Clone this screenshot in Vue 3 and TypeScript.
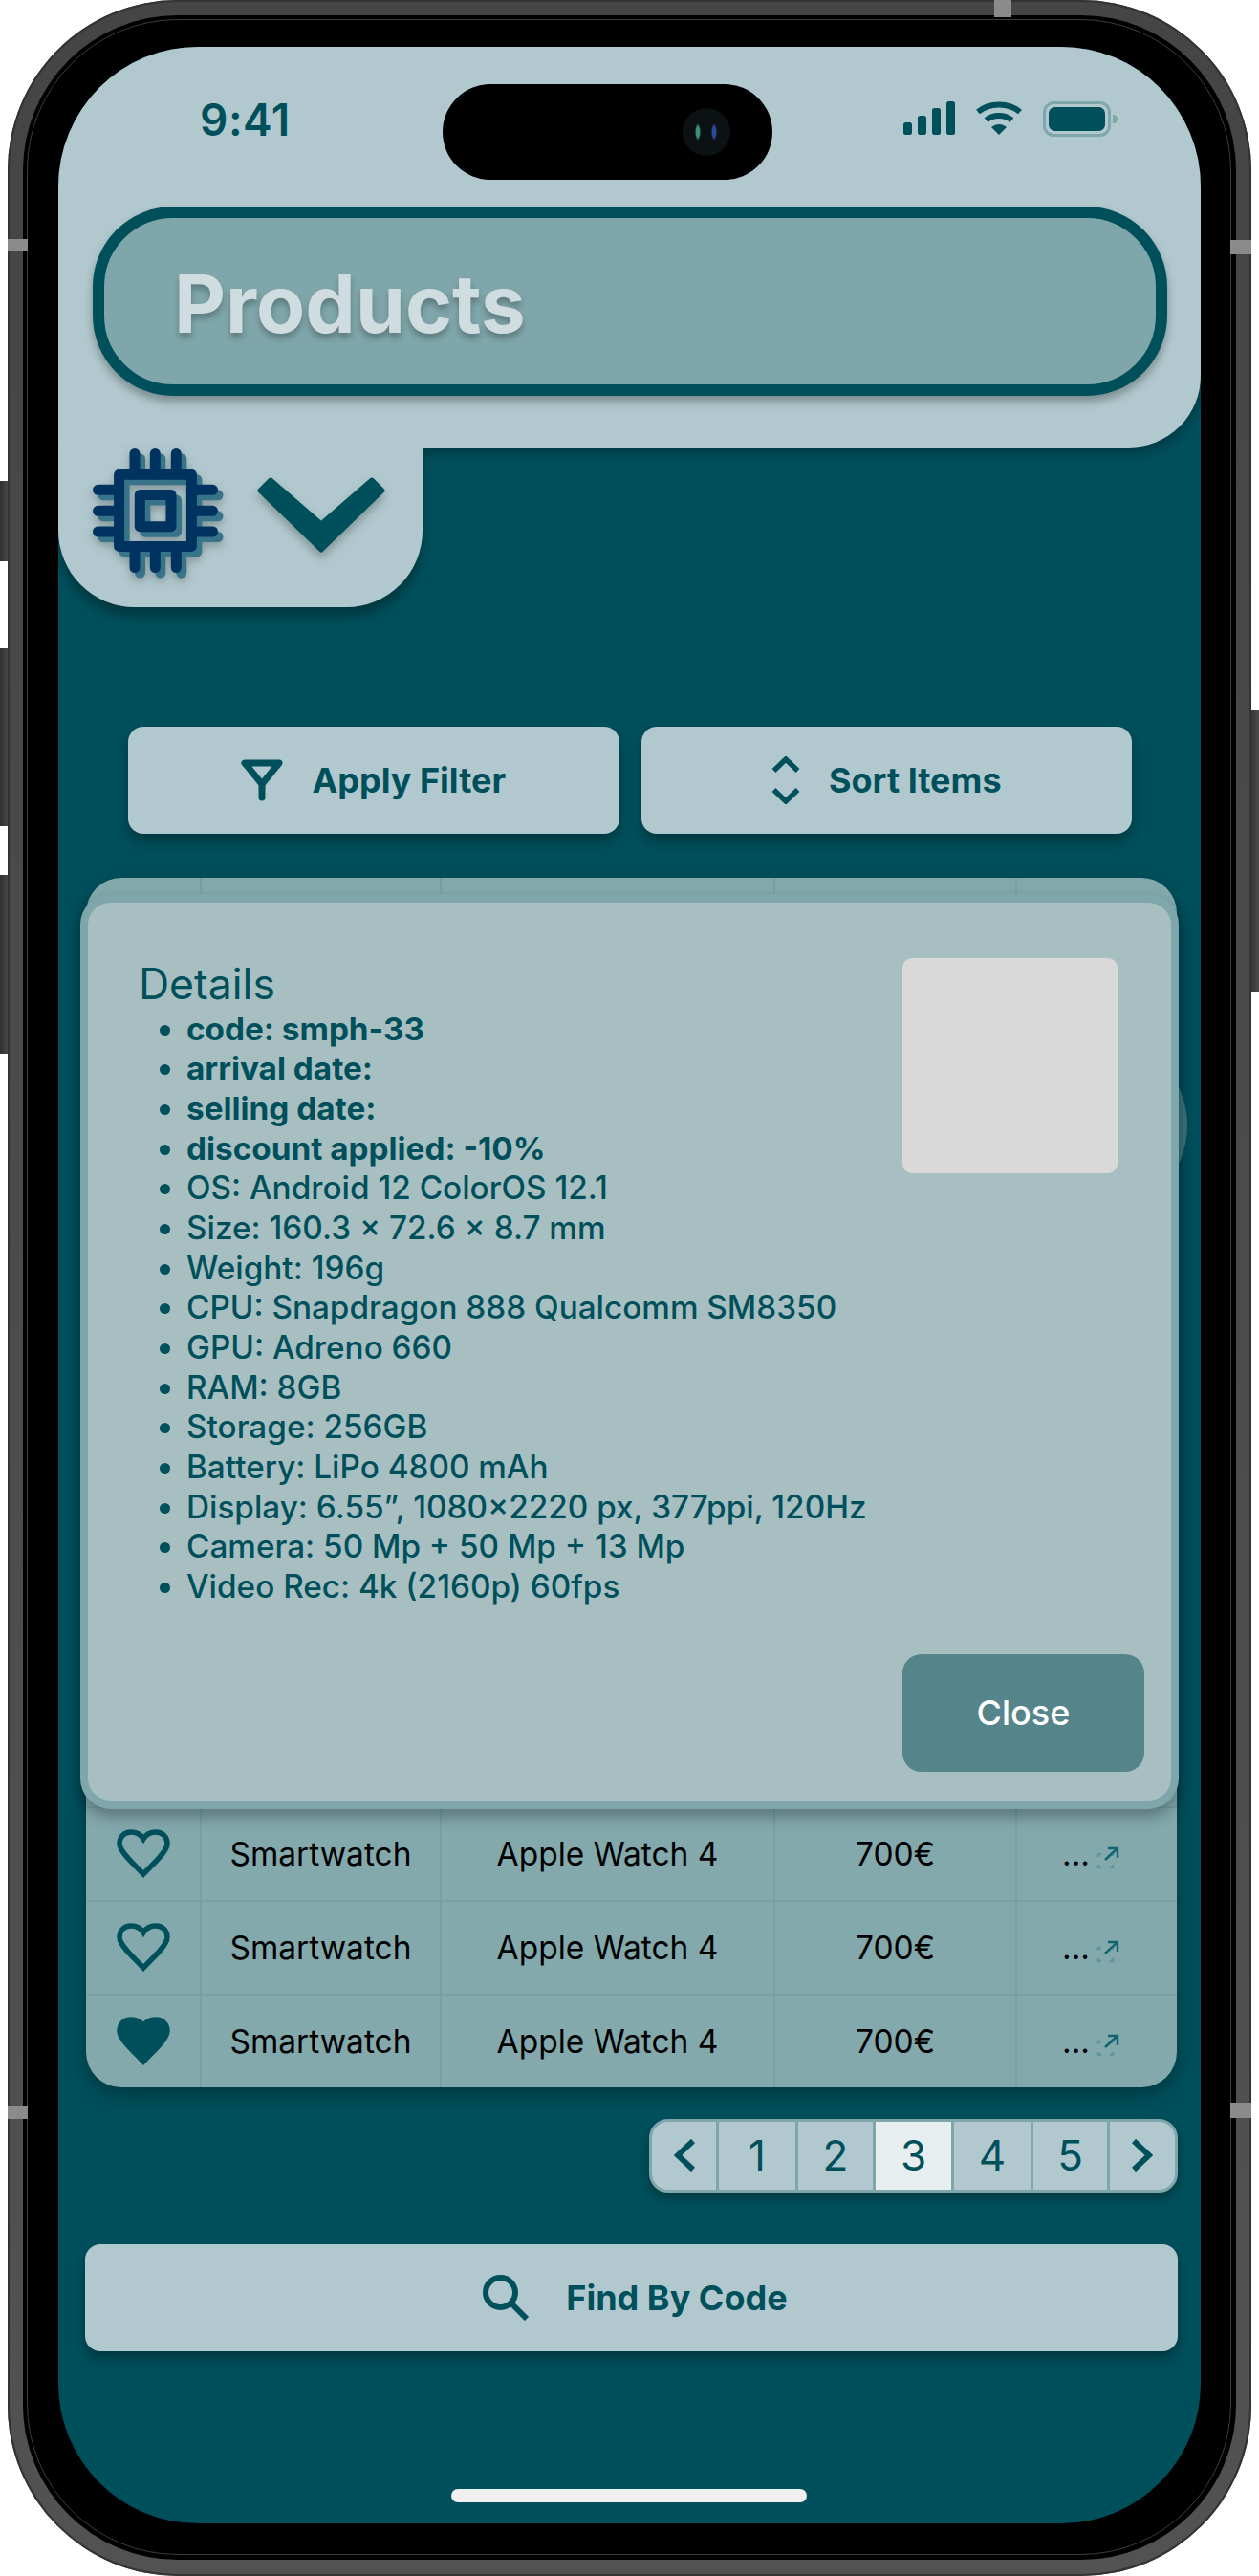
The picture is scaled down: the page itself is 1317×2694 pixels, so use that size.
<template>
  <div class="page">
    <span class="side side-mute"></span>
    <span class="side side-up"></span>
    <span class="side side-down"></span>
    <span class="side side-power"></span>

    <div class="device">
      <span class="band band-lt"></span>
      <span class="band band-rt"></span>
      <span class="band band-lb"></span>
      <span class="band band-rb"></span>
      <span class="band band-top"></span>

      <div class="bezel">
        <div class="bezel-inner">
          <div class="screen">
            <header class="header">
              <div class="status">
                <span class="time">9:41</span>
                <div class="island"><span class="camera"></span></div>
                <div class="status-icons">
                  <svg width="54" height="35" viewBox="0 0 54 35" fill="#00505c">
                    <rect x="0" y="22" width="9" height="13" rx="2.5" />
                    <rect x="15" y="15" width="9" height="20" rx="2.5" />
                    <rect x="30" y="7" width="9" height="28" rx="2.5" />
                    <rect x="45" y="0" width="9" height="35" rx="2.5" />
                  </svg>
                  <svg width="48" height="35" viewBox="0 0 48 35" fill="none" stroke="#00505c" stroke-width="6">
                    <path d="M2 11C14 1 34 1 46 11" />
                    <path d="M10.5 19.5C18 13.5 30 13.5 37.5 19.5" />
                    <path d="M16 27L24 35L32 27C27 23 21 23 16 27Z" fill="#00505c" stroke="none" />
                  </svg>
                  <svg width="78" height="37" viewBox="0 0 78 37">
                    <rect x="1.5" y="1.5" width="68" height="34" rx="10" fill="none" stroke="#7fa6aa" stroke-width="3" />
                    <rect x="6" y="6" width="59" height="25" rx="6.5" fill="#00505c" />
                    <path d="M73 14C76 14 78 16 78 18.5C78 21 76 23 73 23Z" fill="#7fa6aa" />
                  </svg>
                </div>
              </div>
              <div class="title-pill">
                <h1 class="title">Products</h1>
              </div>
            </header>

            <div class="tab">
              <svg class="chip" width="137" height="136" viewBox="0 0 137 136" fill="none" stroke-linecap="round" stroke-linejoin="round">
                <g v-for="layer in chipLayers" :key="layer.color" :stroke="layer.color" :transform="layer.shift" stroke-width="11">
                  <rect x="27.6" y="27.3" width="75.8" height="75.1" />
                  <rect x="49.3" y="48.6" width="32.7" height="33.1" />
                  <path d="M44 5.5V27M65.3 5.5V27M87.3 5.5V27M44 103V124.5M65.3 103V124.5M87.3 103V124.5" />
                  <path d="M5.5 43.3H27M5.5 65.3H27M5.5 87H27M104 43.3H125.5M104 65.3H125.5M104 87H125.5" />
                </g>
              </svg>
              <svg class="chevron" width="134" height="79" viewBox="0 0 134 79">
                <polygon points="3,14 14,3 67,49 120,3 131,14 67,76" fill="#00505c" stroke="#00505c" stroke-width="5" stroke-linejoin="round" />
              </svg>
            </div>

            <div class="actions">
              <button class="action">
                <svg width="44" height="44" viewBox="0 0 44 44" fill="none" stroke="#00505c" stroke-width="7" stroke-linejoin="round" stroke-linecap="round">
                  <path d="M4 4H40L22 26Z" />
                  <path d="M22 26V40" />
                </svg>
                Apply Filter
              </button>
              <button class="action">
                <svg width="30" height="50" viewBox="0 0 30 50" fill="none" stroke="#00505c" stroke-width="5.5">
                  <path d="M2.5 15L15 3L27.5 15" />
                  <path d="M2.5 35L15 47L27.5 35" />
                </svg>
                Sort Items
              </button>
            </div>

            <div class="table">
              <div class="row filler">
                <div v-for="n in 5" :key="n" class="cell"></div>
              </div>
              <div v-for="(item, i) in products" :key="i" class="row">
                <div class="cell">
                  <svg width="56" height="51" viewBox="0 0 56 51" :fill="item.liked ? '#00505c' : 'none'" stroke="#00505c" stroke-width="5.5">
                    <path d="M28 10C25 5 20 3 15 3C8 3 3 8 3 15C3 24 20 38 28 47C36 38 53 24 53 15C53 8 48 3 41 3C36 3 31 5 28 10Z" />
                  </svg>
                </div>
                <div class="cell">{{ item.type }}</div>
                <div class="cell">{{ item.name }}</div>
                <div class="cell">{{ item.price }}</div>
                <div class="cell more">
                  <span>...</span>
                  <svg class="open" width="24" height="24" viewBox="0 0 24 24" fill="none" stroke-width="2.4">
                    <path d="M2 11V8H5M14 8H17V10M2 19V22H5M14 22H17V19" stroke="#5f959e" />
                    <path d="M9 14L22 2M12 2H22V12" stroke="#0f6470" />
                  </svg>
                </div>
              </div>
            </div>

            <nav class="pager">
              <button class="page-cell">
                <svg width="22" height="34" viewBox="0 0 22 34" fill="none" stroke="#00505c" stroke-width="6">
                  <path d="M20 2L4 17L20 32" />
                </svg>
              </button>
              <button v-for="n in pages" :key="n" class="page-cell" :class="{ active: n === currentPage }">{{ n }}</button>
              <button class="page-cell">
                <svg width="22" height="34" viewBox="0 0 22 34" fill="none" stroke="#00505c" stroke-width="6">
                  <path d="M2 2L18 17L2 32" />
                </svg>
              </button>
            </nav>

            <button class="find">
              <svg width="49" height="48" viewBox="0 0 49 48" fill="none" stroke="#00505c" stroke-width="6">
                <circle cx="18.5" cy="18.5" r="15.5" />
                <path d="M29 29L46 46" />
              </svg>
              Find By Code
            </button>

            <div class="home"></div>

            <span class="ghost"></span>

            <section class="modal">
              <div class="modal-body">
                <div class="modal-text">
                  <h2 class="modal-title">Details</h2>
                  <ul class="specs">
                    <li v-for="s in strongSpecs" :key="s" class="strong">{{ s }}</li>
                    <li v-for="s in specs" :key="s">{{ s }}</li>
                  </ul>
                </div>
                <div class="thumb"></div>
              </div>
              <button class="close">Close</button>
            </section>
          </div>
        </div>
      </div>
    </div>
  </div>
</template>

<script setup lang="ts">
interface Product {
  type: string;
  name: string;
  price: string;
  liked: boolean;
}

const chipLayers = [
  { color: "#37748a", shift: "translate(5.5 5.5)" },
  { color: "#003360", shift: "" },
];

const products: Product[] = [
  { type: "Smartwatch", name: "Apple Watch 4", price: "700€", liked: false },
  { type: "Smartwatch", name: "Apple Watch 4", price: "700€", liked: false },
  { type: "Smartwatch", name: "Apple Watch 4", price: "700€", liked: true },
];

const pages = [1, 2, 3, 4, 5];
const currentPage = 3;

const strongSpecs = ["code: smph-33", "arrival date:", "selling date:", "discount applied: -10%"];

const specs = [
  "OS: Android 12 ColorOS 12.1",
  "Size: 160.3 × 72.6 × 8.7 mm",
  "Weight: 196g",
  "CPU: Snapdragon 888 Qualcomm SM8350",
  "GPU: Adreno 660",
  "RAM: 8GB",
  "Storage: 256GB",
  "Battery: LiPo 4800 mAh",
  "Display: 6.55”, 1080×2220 px, 377ppi, 120Hz",
  "Camera: 50 Mp + 50 Mp + 13 Mp",
  "Video Rec: 4k (2160p) 60fps",
];
</script>

<style>
html,
body {
  background: #fff;
}
</style>

<style scoped>
.page {
  position: relative;
  width: 1317px;
  height: 2694px;
  overflow: hidden;
  font-family: Inter, "Liberation Sans", sans-serif;
  color: #00505c;
}

.side {
  position: absolute;
  width: 10px;
  background: linear-gradient(90deg, #2f2f2f, #4d4d4d);
}

.side-mute {
  left: 0;
  top: 503px;
  height: 84px;
}

.side-up {
  left: 0;
  top: 678px;
  height: 186px;
}

.side-down {
  left: 0;
  top: 915px;
  height: 187px;
}

.side-power {
  right: 0;
  top: 743px;
  height: 294px;
}

.device {
  position: relative;
  box-sizing: border-box;
  width: 1301px;
  height: 2694px;
  margin-left: 8px;
  padding: 16px 16px 17px;
  border-radius: 178px;
  background: linear-gradient(180deg, #454545, #525252);
  box-shadow: inset 0 0 0 2px #333;
}

.band {
  position: absolute;
  background: #8b8b8b;
}

.band-lt {
  left: 0;
  top: 250px;
  width: 21px;
  height: 13px;
}

.band-rt {
  right: 0;
  top: 251px;
  width: 22px;
  height: 15px;
}

.band-lb {
  left: 0;
  top: 2202px;
  width: 21px;
  height: 14px;
}

.band-rb {
  right: 0;
  top: 2199px;
  width: 22px;
  height: 16px;
}

.band-top {
  left: 1032px;
  top: 0;
  width: 18px;
  height: 18px;
}

.bezel {
  box-sizing: border-box;
  height: 100%;
  padding: 4px 5px 5px 4px;
  border-radius: 162px;
  background: #000;
}

.bezel-inner {
  box-sizing: border-box;
  height: 100%;
  padding: 27.5px 31px 32.5px 32px;
  border: 1.5px solid #3c3c3c;
  border-radius: 158px;
  background: #000;
}

.screen {
  position: relative;
  display: flex;
  flex-direction: column;
  height: 100%;
  overflow: hidden;
  border-radius: 146px;
  background: #00505c;
}

.header {
  position: relative;
  box-sizing: border-box;
  height: 419px;
  padding: 0 35px 0 36px;
  border-radius: 0 0 75px 0;
  background: #b1c9ce;
  box-shadow: 0 6px 14px rgba(0, 0, 0, 0.3);
}

.status {
  display: flex;
  align-items: flex-start;
  height: 167px;
  box-sizing: border-box;
  padding: 39px 0 0 112px;
}

.time {
  width: 254px;
  font-size: 46px;
  font-weight: 600;
  line-height: 74px;
  letter-spacing: 0.5px;
}

.island {
  display: flex;
  align-items: center;
  justify-content: flex-end;
  box-sizing: border-box;
  width: 345px;
  height: 100px;
  padding-right: 44px;
  border-radius: 50px;
  background: #000;
}

.camera {
  width: 50px;
  height: 50px;
  border-radius: 50%;
  background:
    radial-gradient(ellipse 3px 9px at 32% 50%, #3f8f7c 0, #3f8f7c 60%, transparent 100%),
    radial-gradient(ellipse 3px 9px at 66% 50%, #2c4a9c 0, #2c4a9c 60%, transparent 100%),
    #0c1114;
}

.status-icons {
  display: flex;
  align-items: flex-start;
  gap: 22px;
  margin-top: 18px;
  margin-left: 137px;
}

.title-pill {
  display: flex;
  align-items: center;
  box-sizing: border-box;
  height: 198px;
  padding-left: 73px;
  border: 12px solid #00505c;
  border-radius: 84px;
  background: #7fa6aa;
  box-shadow: 0 6px 10px rgba(0, 0, 0, 0.3);
}

.title {
  margin: 6px 0 0;
  color: #d0dde0;
  font-size: 83.5px;
  font-weight: 700;
  line-height: 1;
  text-shadow: 0 5px 6px rgba(0, 0, 0, 0.25);
}

.tab {
  position: relative;
  display: flex;
  align-items: flex-start;
  box-sizing: border-box;
  width: 381px;
  height: 167px;
  padding: 1px 0 0 36px;
  border-radius: 0 0 80px 80px;
  background: #b1c9ce;
  box-shadow: 0 10px 12px rgba(0, 0, 0, 0.3);
}

.chip {
  filter: drop-shadow(0 4px 5px rgba(0, 0, 0, 0.25));
}

.chevron {
  margin: 30px 0 0 35px;
  filter: drop-shadow(0 6px 5px rgba(0, 0, 0, 0.25));
}

.actions {
  display: flex;
  gap: 23px;
  margin: 125px 72px 0 73px;
}

.action,
.find {
  display: flex;
  align-items: center;
  justify-content: center;
  border: 0;
  border-radius: 16px;
  background: #b1c9ce;
  color: #00505c;
  font-family: inherit;
  font-size: 36px;
  font-weight: 700;
  box-shadow: 0 8px 14px rgba(0, 0, 0, 0.3);
}

.action {
  flex: 1;
  gap: 30px;
  height: 112px;
  padding: 0;
}

.table {
  margin: 46px 25px 0 29px;
  overflow: hidden;
  border-radius: 37px;
  background: #83a9ad;
  color: #000;
  font-size: 33.5px;
  box-shadow: 0 8px 20px rgba(0, 0, 0, 0.3);
}

.row {
  display: grid;
  grid-template-columns: 119px 251px 349px 253px 168px;
  height: 98px;
  border-top: 2px solid #78a0a4;
  box-sizing: border-box;
}

.filler {
  height: 971px;
  border-top: 0;
}

.cell {
  display: flex;
  align-items: center;
  justify-content: center;
  border-left: 2px solid #78a0a4;
}

.cell:first-child {
  border-left: 0;
}

.more {
  gap: 7px;
  padding-right: 12px;
}

.open {
  margin-top: 8px;
}

.pager {
  display: grid;
  grid-template-columns: 67px 83px 81px 82px 83px 80px 71px;
  align-self: flex-end;
  height: 77px;
  box-sizing: border-box;
  margin: 33px 24px 0 0;
  overflow: hidden;
  border: 3px solid #7fa6aa;
  border-radius: 20px;
  background: #b1c9ce;
  box-shadow: 0 6px 12px rgba(0, 0, 0, 0.3);
}

.page-cell {
  display: flex;
  align-items: center;
  justify-content: center;
  padding: 0;
  border: 0;
  border-left: 3px solid #7fa6aa;
  background: transparent;
  color: #00505c;
  font-family: inherit;
  font-size: 44px;
  font-weight: 400;
}

.page-cell:first-child {
  border-left: 0;
}

.page-cell.active {
  background: #e6eeef;
}

.find {
  gap: 38px;
  flex: none;
  height: 112px;
  margin: 54px 24px 0 28px;
  padding: 0 0 0 8px;
  font-weight: 700;
}

.home {
  flex: none;
  width: 372px;
  height: 14px;
  margin: 144px 0 0 411px;
  border-radius: 7px;
  background: #f0f0f0;
}

.ghost {
  position: absolute;
  left: 995px;
  top: 1035px;
  width: 186px;
  height: 186px;
  border-radius: 50%;
  background: rgba(178, 200, 205, 0.3);
}

.modal {
  position: absolute;
  left: 23px;
  top: 886px;
  display: flex;
  flex-direction: column;
  box-sizing: border-box;
  width: 1149px;
  height: 957px;
  padding: 58px 28px 30px 53px;
  border: 8px solid #7fa6aa;
  border-top-width: 9px;
  border-bottom-width: 9px;
  border-radius: 32px;
  background: #a8bfc2;
  box-shadow: 0 8px 16px rgba(0, 0, 0, 0.3);
}

.modal-body {
  display: flex;
  justify-content: space-between;
  flex: 1;
}

.modal-title {
  margin: 0;
  font-size: 44.5px;
  font-weight: 400;
  line-height: 54px;
}

.specs {
  margin: 0;
  padding-left: 50px;
  font-size: 33.3px;
  font-weight: 500;
  line-height: 41.67px;
}

.strong {
  font-weight: 700;
}

.thumb {
  width: 225px;
  height: 225px;
  margin-right: 28px;
  border-radius: 10px;
  background: #d9d9d9;
}

.close {
  align-self: flex-end;
  width: 253px;
  height: 123px;
  border: 0;
  border-radius: 20px;
  background: #55848b;
  color: #fff;
  font-family: inherit;
  font-size: 36px;
  font-weight: 500;
}
</style>
